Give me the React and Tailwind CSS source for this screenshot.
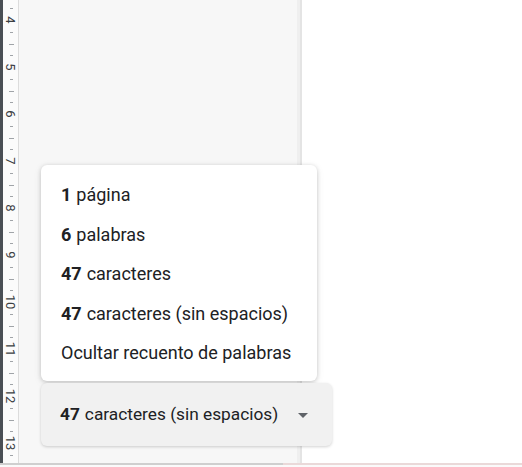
import React from "react";

const numbers = [4, 5, 6, 7, 8, 9, 10, 11, 12, 13];
const ticks = [];
for (let k = -1; k < 40; k++) {
  if (k % 4 === 0) continue;
  const y = 20 + k * 11.75;
  if (y < 0 || y > 463) continue;
  ticks.push({ y, half: k % 2 === 0 && k % 4 !== 0 });
}

function Item({ num, label }) {
  return (
    <div className="h-[39.5px] flex items-center pl-[20px] text-[18px] text-[#202124]">
      {num !== undefined && <span className="font-bold mr-[5px]">{num}</span>}
      <span>{label}</span>
    </div>
  );
}

export default function App() {
  return (
    <div
      className="relative w-[522px] h-[467px] overflow-hidden bg-white flex flex-col"
      style={{ fontFamily: "Roboto, 'Liberation Sans', sans-serif" }}
    >
      <div className="flex flex-row h-[463px]">
        <div className="w-[3px] bg-[#4a4f55]" />
        <div className="relative w-[16px] bg-[#fbfbfb] border-r border-[#dcdcdc]">
          {ticks.map((t, i) => (
            <div
              key={i}
              className="absolute h-px bg-[#a0a4a8]"
              style={{ top: t.y, left: t.half ? 6 : 7, width: t.half ? 5 : 3 }}
            />
          ))}
          {numbers.map((n, i) => (
            <div
              key={n}
              className="absolute left-0 w-[16px] h-[16px] flex items-center justify-center text-[13px] leading-none text-[#3c4043] rotate-90"
              style={{ top: 20 + i * 47 - 8 }}
            >
              {n}
            </div>
          ))}
        </div>
        <div className="w-[278px] bg-[#f7f7f7]" />
        <div className="w-[3px] bg-[#efefef]" />
        <div className="w-[2px] bg-[#e4e4e4]" />
        <div className="flex-1 bg-white" />
      </div>
      <div className="flex flex-row h-[2px]">
        <div className="w-[283px] bg-[#cfcfcf]" />
        <div className="flex-1 bg-[#ead9d9]" />
      </div>
      <div className="flex-1 bg-[#fafafa]" />

      <div className="absolute left-[41px] top-[165px] w-[276px] h-[216px] bg-white rounded-[6px] shadow-[0_1px_4px_rgba(0,0,0,0.18),0_2px_8px_rgba(0,0,0,0.08)] pt-[10px] flex flex-col">
        <Item num="1" label="página" />
        <Item num="6" label="palabras" />
        <Item num="47" label="caracteres" />
        <Item num="47" label="caracteres (sin espacios)" />
        <Item label="Ocultar recuento de palabras" />
      </div>

      <div className="absolute left-[41px] top-[383px] w-[291px] h-[63px] bg-[#f1f1f1] rounded-[6px] shadow-[0_1px_3px_rgba(0,0,0,0.18)] flex items-center pl-[19px] pr-[24px] text-[17.3px] text-[#202124]">
        <span className="font-bold mr-[5px]">47</span>
        <span className="flex-1">caracteres (sin espacios)</span>
        <svg width="10" height="5" viewBox="0 0 10 5" className="mt-[1px]">
          <path d="M0 0 L10 0 L5 5 Z" fill="#5f6368" />
        </svg>
      </div>
    </div>
  );
}
